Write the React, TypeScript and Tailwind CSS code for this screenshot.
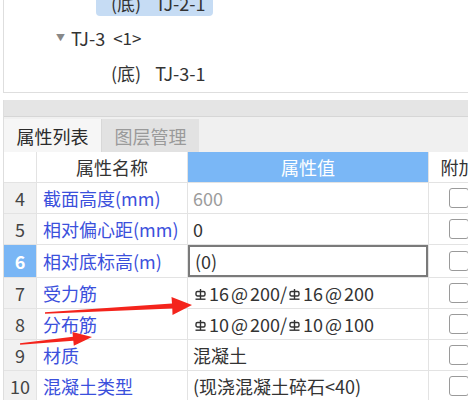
import React from "react";

// HRB400-style rebar grade mark, drawn since no font carries it
function Rebar() {
  return (
    <svg
      width="11"
      height="11"
      viewBox="0 0 11 11"
      className="ml-[2px] mr-[3px] inline-block align-[1px]"
      fill="none"
      stroke="#333"
      strokeWidth="1.4"
    >
      <rect x="1" y="2.5" width="9" height="4.5" rx="1.5" />
      <line x1="5.5" y1="0" x2="5.5" y2="10" />
      <line x1="0.5" y1="10.2" x2="10.5" y2="10.2" />
    </svg>
  );
}

function At() {
  return <span className="px-[2px]">@</span>;
}

type Row = {
  no: number;
  name: string;
  value: React.ReactNode;
  dim?: boolean;
  editing?: boolean;
};

const rows: Row[] = [
  { no: 4, name: "截面高度(mm)", value: "600", dim: true },
  { no: 5, name: "相对偏心距(mm)", value: "0" },
  { no: 6, name: "相对底标高(m)", value: "(0)", editing: true },
  {
    no: 7,
    name: "受力筋",
    value: (
      <>
        <Rebar />16<At />200/<Rebar />16<At />200
      </>
    ),
  },
  {
    no: 8,
    name: "分布筋",
    value: (
      <>
        <Rebar />10<At />200/<Rebar />10<At />100
      </>
    ),
  },
  { no: 9, name: "材质", value: "混凝土" },
  { no: 10, name: "混凝土类型", value: "(现浇混凝土碎石<40)" },
];

function Checkbox() {
  return (
    <span className="block h-[20px] w-[20px] rounded-[3px] border-[1.5px] border-[#9a9a9a] bg-white" />
  );
}

export default function App() {
  return (
    <div className="relative h-[400px] w-[468px] overflow-hidden bg-white font-['Noto_Sans_CJK_SC','Noto_Sans',sans-serif] text-[18px] leading-none text-[#333]">
      {/* Tree panel */}
      <div className="ml-[3px] h-[93px] overflow-hidden border-b border-l border-[#dedede]">
        <div className="-mt-[15px] flex flex-col">
          <div className="flex h-[35px] items-center">
            <div className="ml-[92px] flex h-[26px] w-[117px] items-center rounded-[4px] bg-[#c6dcf4] pl-[15px]">
              (底)<span className="ml-[14px]">TJ-2-1</span>
            </div>
          </div>
          <div className="flex h-[35px] items-center">
            <span className="ml-[52px] mr-[6px] text-[9px] text-[#888]">▼</span>
            <span>TJ-3</span>
            <span className="ml-[8px] text-[17px]">&lt;1&gt;</span>
          </div>
          <div className="flex h-[35px] items-center pl-[107px]">
            (底)<span className="ml-[14px]">TJ-3-1</span>
          </div>
        </div>
      </div>

      {/* Properties panel */}
      <div className="mt-[7px] ml-[3px] border-l border-[#dedede]">
        <div className="h-[17px] border-b border-[#d6d6d6] bg-[#e5e5e5]" />
        <div className="flex h-[35px] items-end bg-[#f0f0f0]">
          <div className="flex h-[33px] w-[97px] items-center justify-center bg-[#f6f6f6] text-[#2a2a2a]">
            属性列表
          </div>
          <div className="flex h-[33px] w-[98px] items-center justify-center border-l border-[#d8d8d8] bg-[#e2e2e2] text-[#9a9a9a]">
            图层管理
          </div>
        </div>

        {/* Table */}
        <div className="w-[530px]">
          <div className="flex h-[31px] border-b border-[#e3e3e3]">
            <div className="w-[33px] border-r border-[#e3e3e3] bg-white" />
            <div className="flex w-[151px] items-center justify-center border-r border-[#e3e3e3]">
              属性名称
            </div>
            <div className="flex w-[240px] items-center justify-center bg-[#7ab7f6] text-white">
              属性值
            </div>
            <div className="flex w-[60px] items-center justify-center border-l border-[#e3e3e3]">
              附加
            </div>
          </div>

          {rows.map((r) => (
            <div
              key={r.no}
              className={`flex border-b border-[#e3e3e3] ${r.editing ? "h-[33px]" : "h-[31px]"}`}
            >
              <div
                className={`flex w-[33px] items-center justify-center border-r border-[#e3e3e3] ${
                  r.editing ? "bg-[#79b6f5] font-bold text-white" : "bg-[#f1f1f1] text-[#444]"
                }`}
              >
                {r.no}
              </div>
              <div className="flex w-[151px] items-center border-r border-[#e3e3e3] pl-[6px] text-[#3b50dc]">
                {r.name}
              </div>
              <div
                className={`flex w-[240px] items-center pl-[5px] ${
                  r.editing ? "border-2 border-[#7a7a7a] pl-[3px]" : ""
                } ${r.dim ? "text-[#9c9c9c]" : "text-[#333]"}`}
              >
                <span>{r.value}</span>
              </div>
              <div className="flex w-[60px] items-center justify-center border-l border-[#e3e3e3]">
                <Checkbox />
              </div>
            </div>
          ))}
        </div>
      </div>

      {/* Red annotation arrows */}
      <svg
        className="pointer-events-none absolute left-0 top-0"
        width="468"
        height="400"
        viewBox="0 0 468 400"
      >
        <polygon
          fill="#f4241c"
          points="45,312.2 172,303.6 171.5,297.1 192,305 172.5,315.1 172.3,308.6 45,313.8"
        />
        <polygon
          fill="#f4241c"
          points="20,343.2 72.9,336.8 72.4,331.9 92,337 73.8,345.8 73.3,340.8 20.1,344.8"
        />
      </svg>
    </div>
  );
}
